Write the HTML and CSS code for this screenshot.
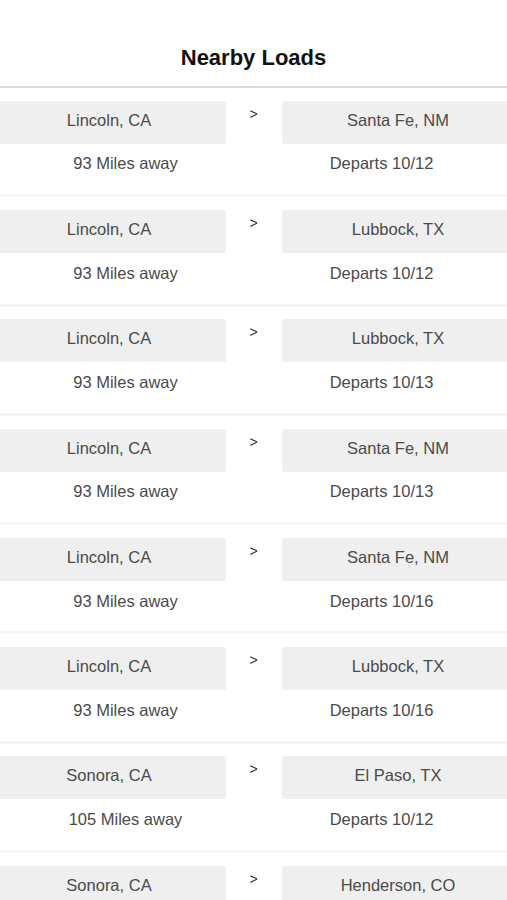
FILE: index.html
```html
<!DOCTYPE html>
<html lang="en">
<head>
<meta charset="utf-8">
<title>Nearby Loads</title>
<link rel="stylesheet" href="styles.css">
</head>
<body>
<header class="nav">
  <h1 class="nav-title">Nearby Loads</h1>
</header>
<main class="list">
  <div class="load">
    <div class="city">Lincoln, CA</div>
    <div class="arrow">&gt;</div>
    <div class="city">Santa Fe, NM</div>
    <div class="meta meta-left">93 Miles away</div>
    <div class="meta meta-right">Departs 10/12</div>
  </div>
  <div class="load">
    <div class="city">Lincoln, CA</div>
    <div class="arrow">&gt;</div>
    <div class="city">Lubbock, TX</div>
    <div class="meta meta-left">93 Miles away</div>
    <div class="meta meta-right">Departs 10/12</div>
  </div>
  <div class="load">
    <div class="city">Lincoln, CA</div>
    <div class="arrow">&gt;</div>
    <div class="city">Lubbock, TX</div>
    <div class="meta meta-left">93 Miles away</div>
    <div class="meta meta-right">Departs 10/13</div>
  </div>
  <div class="load">
    <div class="city">Lincoln, CA</div>
    <div class="arrow">&gt;</div>
    <div class="city">Santa Fe, NM</div>
    <div class="meta meta-left">93 Miles away</div>
    <div class="meta meta-right">Departs 10/13</div>
  </div>
  <div class="load">
    <div class="city">Lincoln, CA</div>
    <div class="arrow">&gt;</div>
    <div class="city">Santa Fe, NM</div>
    <div class="meta meta-left">93 Miles away</div>
    <div class="meta meta-right">Departs 10/16</div>
  </div>
  <div class="load">
    <div class="city">Lincoln, CA</div>
    <div class="arrow">&gt;</div>
    <div class="city">Lubbock, TX</div>
    <div class="meta meta-left">93 Miles away</div>
    <div class="meta meta-right">Departs 10/16</div>
  </div>
  <div class="load">
    <div class="city">Sonora, CA</div>
    <div class="arrow">&gt;</div>
    <div class="city">El Paso, TX</div>
    <div class="meta meta-left">105 Miles away</div>
    <div class="meta meta-right">Departs 10/12</div>
  </div>
  <div class="load">
    <div class="city">Sonora, CA</div>
    <div class="arrow">&gt;</div>
    <div class="city">Henderson, CO</div>
  </div>
</main>
</body>
</html>
```
FILE: styles.css
```css
html, body {
  margin: 0;
  padding: 0;
  background: #ffffff;
  overflow-x: hidden;
}

body {
  font-family: "Liberation Sans", Arial, Helvetica, sans-serif;
  color: #4a4a4a;
}

.nav {
  height: 88px;
  box-sizing: border-box;
  padding-top: 44.5px;
  border-bottom: 2px solid #dadada;
}

.nav-title {
  margin: 0;
  text-align: center;
  font-size: 22px;
  line-height: 26px;
  font-weight: 700;
  color: #111111;
}

.list {
  display: flex;
  flex-direction: column;
}

.load {
  display: grid;
  grid-template-columns: 233px 56px 233px;
  grid-template-rows: 43px auto;
  justify-content: center;
  height: 109.3px;
  box-sizing: border-box;
  padding-top: 12.7px;
  border-bottom: 3px solid #f5f5f5;
}

.city {
  display: flex;
  align-items: center;
  justify-content: center;
  box-sizing: border-box;
  padding-bottom: 4px;
  background: #efefef;
  border-radius: 3px;
  font-size: 16.5px;
  color: #4a4a4a;
}

.arrow {
  align-self: start;
  justify-self: center;
  margin-top: 5px;
  font-size: 14px;
  line-height: 16px;
  color: #333333;
}

.meta {
  width: 200px;
  margin-top: 9.8px;
  text-align: center;
  font-size: 16.5px;
  line-height: 20px;
  color: #4a4a4a;
}

.meta-left {
  grid-column: 1;
  justify-self: end;
}

.meta-right {
  grid-column: 3;
  justify-self: start;
}
```
